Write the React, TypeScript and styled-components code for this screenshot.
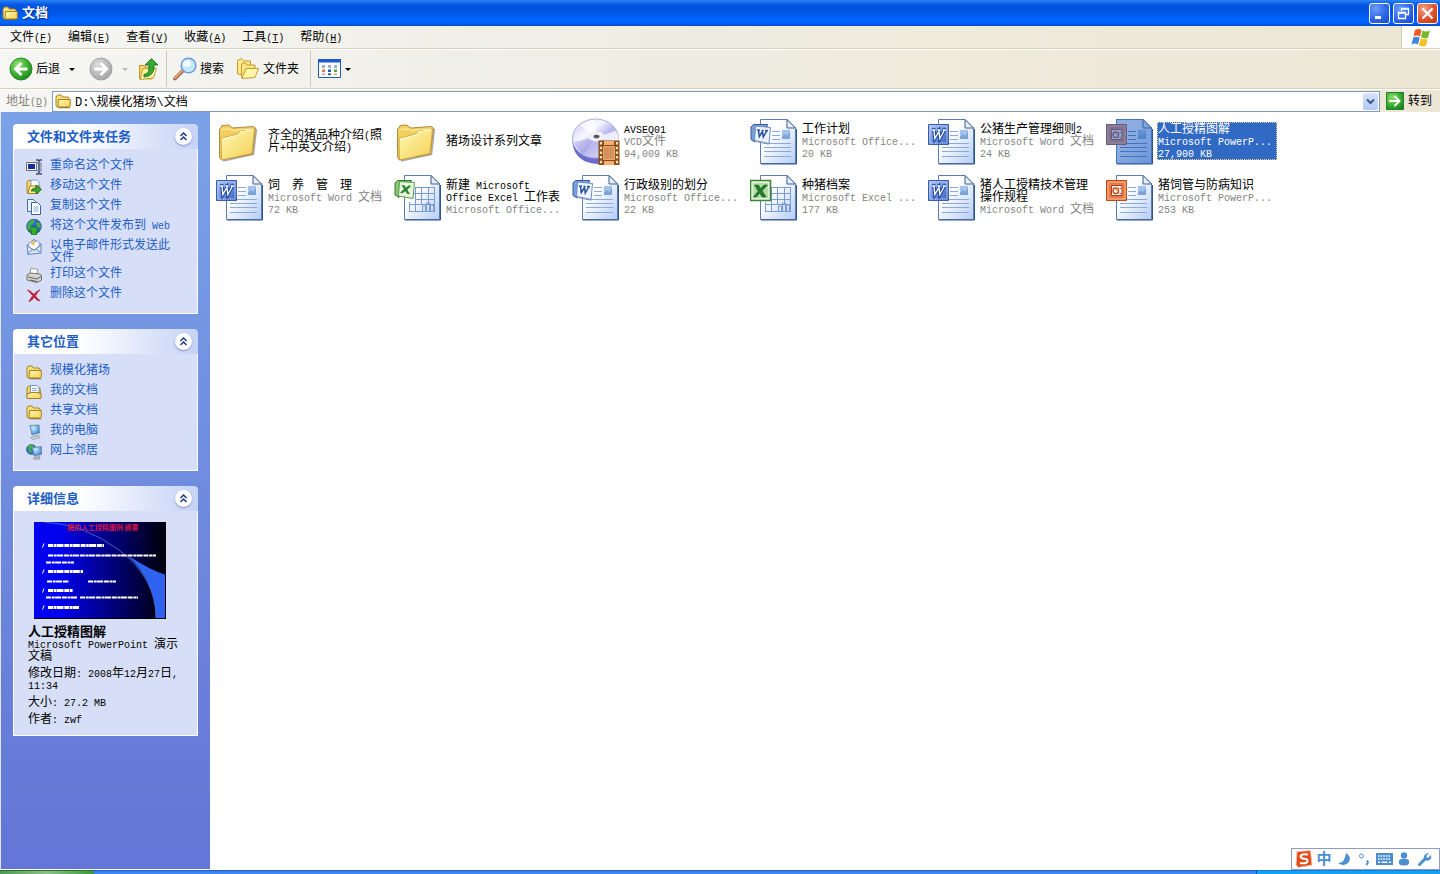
import React from "react";
import styled, { createGlobalStyle } from "styled-components";

const cjk = `"Liberation Sans", "Noto Sans CJK SC", sans-serif`;
const mono = `"Liberation Mono", "Noto Sans CJK SC", monospace`;

const GlobalStyle = createGlobalStyle`
  *, *::before, *::after { box-sizing: border-box; }
  body { margin: 0; background: #fff; font: 12px/12px ${cjk}; color: #000; }
  button, input { font: inherit; color: inherit; margin: 0; padding: 0; border: 0; background: none; }
  ul { list-style: none; margin: 0; padding: 0; }
  h1, h2, p { margin: 0; }
  svg { display: block; flex: none; }
`;

const Window = styled.div`
  min-height: 100vh;
  display: flex;
  flex-direction: column;
`;

const TitleBar = styled.header`
  height: 26px;
  flex: none;
  display: flex;
  align-items: center;
  gap: 3px;
  padding: 0 2px;
  background: linear-gradient(#2a86f8 0, #1a70f0 2px, #0456e2 5px, #0054e3 12px, #0062fb 18px, #0064ff 23px, #0048cc 26px);
`;

const WindowTitle = styled.h1`
  flex: 1;
  padding-left: 1px;
  font: bold 13px/18px ${cjk};
  color: #fff;
  text-shadow: 1px 1px 1px #0a2c80;
`;

const CaptionButton = styled.button<{ $danger?: boolean }>`
  width: 21px;
  height: 21px;
  display: grid;
  place-items: center;
  border: 1px solid #fff;
  border-radius: 3px;
  background: ${(p) =>
    p.$danger
      ? "radial-gradient(circle at 30% 25%, #f0a088, #e0512c 55%, #c03410)"
      : "radial-gradient(circle at 30% 25%, #6d9cf8, #2d66e8 55%, #1848c8)"};
`;

const Bar = styled.div`
  flex: none;
  display: flex;
  background: linear-gradient(90deg, #f6f6f4, #f0efe8 30%, #eeeadb 70%, #ece7d5);
`;

const MenuBar = styled(Bar).attrs({ as: "nav" })`
  height: 23px;
  border-bottom: 1px solid #d8d2bd;
  padding-left: 2px;
`;

const MenuButton = styled.button`
  padding: 0 8px;
  white-space: nowrap;
`;

const LogoCell = styled.div`
  width: 39px;
  margin-left: auto;
  display: grid;
  place-items: center;
  background: #fff;
  border-left: 1px solid #cfcab8;
`;

const ToolBar = styled(Bar)`
  height: 40px;
  align-items: center;
  border-top: 1px solid #fff;
  border-bottom: 1px solid #d8d2bd;
  padding-left: 9px;
`;

const ToolButton = styled.button<{ $width: number }>`
  width: ${(p) => p.$width}px;
  height: 32px;
  display: flex;
  align-items: center;
  gap: 3px;
  white-space: nowrap;
`;

const Caret = styled.span<{ $dim?: boolean; $near?: boolean }>`
  border: 3px solid transparent;
  border-top-color: ${(p) => (p.$dim ? "#bbb8ac" : "#000")};
  border-bottom: 0;
  margin-left: ${(p) => (p.$near ? 0 : 6)}px;
`;

const Divider = styled.span<{ $right: number }>`
  width: 1px;
  height: 36px;
  margin-right: ${(p) => p.$right}px;
  background: #cdc9b8;
`;

const AddressBar = styled(Bar)`
  height: 23px;
  align-items: center;
  border-top: 1px solid #fff;
  padding: 0 8px 0 6px;
`;

const AddressLabel = styled.label`
  width: 46px;
  color: #87857c;
`;

const AddressBox = styled.div`
  flex: 1;
  height: 21px;
  display: flex;
  align-items: center;
  padding: 0 1px 0 2px;
  background: #fff;
  border: 1px solid #7f9db9;
`;

const AddressInput = styled.input`
  flex: 1;
  height: 18px;
  padding-left: 4px;
  font-family: ${mono};
  outline: 0;
`;

const DropButton = styled.button`
  width: 15px;
  height: 17px;
  display: grid;
  place-items: center;
  border-radius: 2px;
  background: linear-gradient(#d6e2fd, #b4c8f6);
`;

const GoButton = styled.button`
  display: flex;
  align-items: center;
  gap: 4px;
  margin-left: 6px;
  white-space: nowrap;
`;

const Body = styled.div`
  flex: 1;
  display: flex;
  border-left: 1px solid #dfe6f8;
  border-bottom: 1px solid #fff;
`;

const Sidebar = styled.aside`
  width: 209px;
  flex: none;
  display: flex;
  flex-direction: column;
  gap: 15px;
  padding: 12px;
  background: linear-gradient(#7ba2e7, #6375d6);
`;

const Panel = styled.section`
  width: 185px;
`;

const PanelHead = styled.div`
  height: 25px;
  display: flex;
  align-items: center;
  justify-content: space-between;
  padding: 0 6px 0 14px;
  border-radius: 4px 4px 0 0;
  background: linear-gradient(90deg, #fff 35%, #c6d3f7);
`;

const PanelTitle = styled.h2`
  font: bold 13px/16px ${cjk};
  color: #215dc6;
`;

const FoldButton = styled.button`
  width: 17px;
  height: 17px;
  display: grid;
  place-items: center;
  border-radius: 50%;
  background: #fff;
  box-shadow: 0 1px 2px #8090c0;
`;

const PanelBody = styled.div`
  padding: 10px 12px;
  background: #d6dff7;
  border: 1px solid #fff;
  border-top: 0;
`;

const LinkList = styled.ul`
  display: flex;
  flex-direction: column;
  gap: 4px;
  padding-right: 8px;
`;

const TaskLink = styled.a`
  min-height: 16px;
  display: flex;
  gap: 8px;
  color: #215dc6;
  text-decoration: none;
`;

const Details = styled.div`
  display: flex;
  flex-direction: column;
  gap: 5px;
  padding-left: 2px;
`;

const Thumbnail = styled.div`
  padding: 1px 0 2px 6px;
`;

const DetailName = styled.strong`
  display: block;
  font: bold 13px/12px ${cjk};
`;

const Files = styled.main`
  flex: 1;
  display: grid;
  grid-template-columns: repeat(auto-fill, 178px);
  grid-auto-rows: 48px;
  row-gap: 8px;
  padding: 5px 0 0 6px;
  background: #fff;
`;

const FileTile = styled.button`
  display: flex;
  align-items: center;
  gap: 3px;
  text-align: left;
`;

const FileText = styled.span<{ $selected?: boolean }>`
  width: 120px;
  border: 1px ${(p) => (p.$selected ? "dotted #e8d090" : "solid transparent")};
  background: ${(p) => (p.$selected ? "#316ac5" : "transparent")};
  color: ${(p) => (p.$selected ? "#fff" : "#000")};
`;

const FileName = styled.span`
  display: block;
`;

const FileMeta = styled.span<{ $selected?: boolean }>`
  display: block;
  white-space: nowrap;
  color: ${(p) => (p.$selected ? "#fff" : "#848484")};
`;

const Latin = styled.span`
  font: 10px/0 ${mono};
`;

const Key = styled.u`
  text-underline-offset: 1px;
`;

const TaskBar = styled.footer`
  height: 4px;
  flex: none;
  display: flex;
  background: linear-gradient(#1f55c8, #3f8cf3 2px, #3a80ee);
`;

const StartEdge = styled.div`
  width: 94px;
  border-radius: 0 3px 0 0;
  background: linear-gradient(90deg, #4f9a4c, #8cc184 50%, #3c9838);
  border-top: 1px solid #2c7030;
`;

const TrayEdge = styled.div`
  width: 184px;
  margin-left: auto;
  background: #16a0f4;
  border-left: 1px solid #0b4fae;
  border-top: 1px solid #1080d8;
`;

const ImeBar = styled.div`
  position: fixed;
  right: 0;
  bottom: 4px;
  width: 149px;
  height: 22px;
  display: flex;
  align-items: center;
  padding-left: 2px;
  background: #fff;
  border: 1px solid #8d9cc4;
`;

const ImeButton = styled.button`
  width: 20px;
  height: 20px;
  display: grid;
  place-items: center;
  font: bold 15px/18px ${cjk};
  color: #4a8ed0;
`;

/* Half-width runs are set in a 6px-wide face beside the 12px Chinese glyphs. */
const T = ({ children }: { children: string }) => (
  <>
    {children.split(/([\x20-\x7e]+)/).map((run, i) => (i % 2 ? <Latin key={i}>{run}</Latin> : run))}
  </>
);

const Shortcut = ({ k }: { k: string }) => (
  <Latin>(<Key>{k}</Key>)</Latin>
);

const Defs = () => (
  <svg width="0" height="0" style={{ position: "absolute" }} aria-hidden="true">
    <defs>
      <linearGradient id="page" x1="0" y1="0" x2="1" y2="1">
        <stop offset=".35" stopColor="#fff" /><stop offset="1" stopColor="#b4ccf4" />
      </linearGradient>
      <linearGradient id="folder" x1="0" y1="0" x2="1" y2="1">
        <stop offset="0" stopColor="#fff9b8" /><stop offset="1" stopColor="#f4cf50" />
      </linearGradient>
      <radialGradient id="green" cx=".35" cy=".3" r=".8">
        <stop offset="0" stopColor="#8fe070" /><stop offset=".6" stopColor="#35ad2c" /><stop offset="1" stopColor="#1c8020" />
      </radialGradient>
      <radialGradient id="grey" cx=".35" cy=".3" r=".8">
        <stop offset="0" stopColor="#dcdcdc" /><stop offset="1" stopColor="#a0a0a0" />
      </radialGradient>
      <linearGradient id="word" x1="0" y1="0" x2="1" y2="1">
        <stop offset="0" stopColor="#a8c4f6" /><stop offset="1" stopColor="#3860c0" />
      </linearGradient>
      <linearGradient id="disc" x1="0" y1="0" x2="1" y2="1">
        <stop offset="0" stopColor="#c8c4f0" /><stop offset=".35" stopColor="#f8f8ff" />
        <stop offset=".55" stopColor="#b8b8ee" /><stop offset="1" stopColor="#e8ecff" />
      </linearGradient>
      <radialGradient id="screen" cx=".35" cy=".3" r=".8">
        <stop offset="0" stopColor="#c8f0ff" /><stop offset="1" stopColor="#2878d8" />
      </radialGradient>
      <linearGradient id="slide" x1="0" y1="0" x2="1" y2="0">
        <stop offset=".2" stopColor="#0202ee" /><stop offset=".95" stopColor="#000014" />
      </linearGradient>
    </defs>
  </svg>
);

const SmallFolder = ({ size = 16 }: { size?: number }) => (
  <svg width={size} height={size} viewBox="0 0 16 16">
    <path d="M1 12.500V4l1.500-2H6l1.500 2H13l1 1.500v7l-1 1.500H2z" fill="#f8e078" stroke="#a8801c" />
    <path d="M3 13l.5-6.500H15.300V12.500L14.500 14H3z" fill="url(#folder)" stroke="#a8801c" />
    <path d="M4 14.800h11.200" stroke="#7c6420" strokeWidth=".8" />
  </svg>
);

const BigFolder = () => (
  <svg width="48" height="48" viewBox="0 0 48 48">
    <path d="M7 44L37.500 37.500 40.500 12" fill="none" stroke="#666" strokeWidth="1.500" opacity=".55" />
    <path d="M3.500 40.500V12l1.500-1 1-2.500L13 8l2 2 2 1 20-1.500 2.500 1.500-3 26L5.500 43z" fill="#f3cf62" stroke="#b08a3c" />
    <path d="M5 21.500L22 17l2-3 14.500-2-2.500 24.500L5.500 43z" fill="url(#folder)" stroke="#c49a38" strokeWidth=".8" />
    <path d="M6 22.200l16.500-4.400 2-3L37.500 13" fill="none" stroke="#fffde0" />
    <path d="M5 12.500l9-.5 3 1.500 20-1.500" fill="none" stroke="#fff2a8" />
  </svg>
);

type Kind = "folder" | "disc" | "word" | "wordx" | "excel" | "excelx" | "ppt";

const Page = ({ grid, selected }: { grid?: boolean; selected?: boolean }) => (
  <g>
    <path d="M10.500 2.500H37l8.500 8.500v35.500h-35z" fill="url(#page)" stroke="#5c7cb4" />
    <path d="M11 47h35.500V12" fill="none" stroke="#34548c" />
    <path d="M37 2.500V11h8.500z" fill="#e4eefc" stroke="#42608e" />
    {grid ? (
      <path d="M22 14.500h19M20 20.500h21M22 26.500h19M15 31.500h26M15 38.500h11M15.500 29v10M21.500 14v24M27.500 14v18M34.500 14v18M40.500 14v24M28.500 38.500V33h3v5.500zM32.500 38.500V30h3v8.500zM36.500 38.500V32h3v6.500zM26 38.500h15" fill="none" stroke="#7b9cd0" />
    ) : (
      <>
        <path d="M22 14.500h8M22 18.500h8M22 22.500h8M14 26.500h27M14 30.500h27M14 34.500h27M14 39.500h27" stroke={selected ? "#547bc0" : "#8aa9dc"} />
        <path d="M32 13h8v9h-8z" fill="#a2c2ec" />
        <path d="M32 20l3-3 2 2 3-4v7h-8z" fill="#7da4da" />
      </>
    )}
  </g>
);

const FileIcon = ({ kind, selected }: { kind: Kind; selected?: boolean }) => {
  if (kind === "folder") return <BigFolder />;
  if (kind === "disc")
    return (
      <svg width="48" height="48" viewBox="0 0 48 48">
        <path d="M.5 20v6Q3 46 26 47q18-2 21-19z" fill="#6c6ccc" />
        <ellipse cx="23.500" cy="21.500" rx="23" ry="19.500" fill="url(#disc)" stroke="#aeb0dc" />
        <path d="M24 20L8 8Q15 3 23 3zM24 20l22 8q2-8-2-14z" fill="#fff" opacity=".7" />
        <path d="M24 20L2 25q3 8 10 12z" fill="#9c98e0" opacity=".5" />
        <ellipse cx="24.500" cy="19.500" rx="8" ry="5" fill="#f0f0fa" />
        <ellipse cx="24.500" cy="19.500" rx="3" ry="1.800" fill="#555" />
        <path d="M26.500 23.500h21V48h-21z" fill="#8a4a18" />
        <path d="M32 24h10v4H32zM32 44h10v4H32z" fill="#f4b070" />
        <path d="M31.500 29.500h11v13h-11z" fill="#d8905c" stroke="#f8c888" strokeWidth=".7" />
        <path d="M29 25v22M45 25v22" stroke="#ffe2a8" strokeWidth="2.200" strokeDasharray="2.500 2.200" />
      </svg>
    );
  return (
    <svg width="48" height="48" viewBox="0 0 48 48">
      <Page grid={kind === "excel" || kind === "excelx"} selected={selected} />
      {kind === "word" && (
        <g>
          <path d="M.5 7.500h20v20H.5z" fill="url(#word)" stroke="#3a5cab" />
          <path d="M2 9h17v17H2z" fill="none" stroke="#c8dafa" strokeWidth=".7" />
          <path d="M4 13h3.500M9.500 13h3M15 13h3M6 13l.8 8.500 4.200-7 .8 7L16.500 13" fill="none" stroke="#1d4298" strokeWidth="3.400" />
          <path d="M4 13h3.500M9.500 13h3M15 13h3M6 13l.8 8.500 4.200-7 .8 7L16.500 13" fill="none" stroke="#f4f8ff" strokeWidth="1.400" />
        </g>
      )}
      {kind === "wordx" && (
        <g>
          <path d="M3.500 7.500h14l-1 4H6L5 25 1 22.500V10z" fill="#7aa0dc" stroke="#36589c" />
          <path d="M5.500 9L20.500 10.500l-1.500 16L4.500 23.500z" fill="#edf3ff" stroke="#6c8cc4" />
          <path d="M7 13l3 .2M11.500 13.400h2M15 13.600l3 .2M8.500 13.500l.8 6 3.200-5 .8 5.500 3.400-6" fill="none" stroke="#284f9e" strokeWidth="1.500" />
          <path d="M6 24.500l13 2.700" stroke="#8898b0" />
        </g>
      )}
      {kind === "excel" && (
        <g>
          <path d="M.5 7.500h20v20H.5z" fill="#e4f4d8" stroke="#3f853c" strokeWidth="1.600" />
          <path d="M3 10h15v15H3z" fill="#b4dca4" />
          <path d="M4.500 12h4l2.200 3.500 3.300-3.500h3.500l-5.300 5.800 4 6.200h-4L9.700 20 6.500 24H3.500l4.700-5.800z" fill="#237830" stroke="#1c6428" strokeWidth=".6" />
        </g>
      )}
      {kind === "excelx" && (
        <g>
          <path d="M3.500 7.500h14l-1 3H6L5 24.500 1 22V10z" fill="#88c870" stroke="#338030" />
          <path d="M5.500 8.500L20.500 9.500l-1.500 16L4.500 23z" fill="#eaf6dc" stroke="#5a9a50" />
          <path d="M7.500 12l3 .3 1.500 2.500 2.500-2.300 2.800.2-4 4 2.700 4.600-3-.5-1.800-2.800-2.500 2.200-2.700-.5 4-3.700z" fill="#2d8038" />
        </g>
      )}
      {kind === "ppt" && (
        <g>
          <path d="M.5 7.500h20v20H.5z" fill="#ec7a48" stroke="#b84c20" />
          <path d="M2 9h17v17H2z" fill="none" stroke="#ffc8a0" strokeWidth=".8" />
          <path d="M5.500 12.500h10.500v10H5.500z" fill="#fff4ec" stroke="#a44020" />
          <circle cx="9.800" cy="17.800" r="2.800" fill="none" stroke="#b04420" strokeWidth="1.300" />
          <path d="M9.800 17.800v-3.300q3 0 3.200 3.300z" fill="#e87840" />
          <path d="M13.500 15.500H15M13.500 20.500H15" stroke="#a84020" />
        </g>
      )}
      {selected && (
        <g fill="#316ac5" opacity=".55">
          <path d="M10 2h27l9 9v36H10V28h11V7H10z" />
          <path d="M0 7h21v21H0z" />
        </g>
      )}
    </svg>
  );
};

const ArrowDisc = ({ fill, stroke, flip }: { fill: string; stroke: string; flip?: boolean }) => (
  <svg width="24" height="24" viewBox="0 0 24 24">
    <circle cx="12" cy="12" r="11" fill={`url(#${fill})`} stroke={stroke} />
    <path d={flip ? "M5.500 12h11M11.500 6l6 6-6 6" : "M18.500 12h-11M12.500 6l-6 6 6 6"} fill="none" stroke="#fff" strokeWidth="3" />
  </svg>
);

const UpFolder = () => (
  <svg width="24" height="24" viewBox="0 0 24 24">
    <path d="M2.500 21.500v-13h5l1 1.500h8.500v9l-2 3z" fill="#f4d468" stroke="#c09428" />
    <path d="M3 22.500l3-11h13.500l-3 9.500z" fill="#fff2a0" stroke="#c8a038" />
    <path d="M7 17.500q6-1 5-9.500H8l6.500-6.500L21 8h-4q1 11-10 12z" fill="#34a832" stroke="#1b6d1e" strokeWidth=".8" />
  </svg>
);

const Magnifier = () => (
  <svg width="25" height="24" viewBox="0 0 25 24">
    <path d="M3 21.500L10.500 14" stroke="#8a5a3c" strokeWidth="3.600" strokeLinecap="round" />
    <path d="M3 21L10 14" stroke="#e8a474" strokeWidth="2.200" strokeLinecap="round" />
    <circle cx="16.500" cy="8.500" r="7.300" fill="#c4e8fa" stroke="#6f9cd8" strokeWidth="1.500" />
    <ellipse cx="15" cy="6.500" rx="4" ry="3.200" fill="#fff" opacity=".8" />
  </svg>
);

const FolderStack = () => (
  <svg width="24" height="24" viewBox="0 0 24 24">
    <path d="M1.500 17V3.500l4-2L8 4h6.500v5L5 17.500z" fill="#f9e88c" stroke="#c69c30" />
    <path d="M5.500 20.500V7l3.500-1.500L11 8h8v4l-12 9.500z" fill="#f8e480" stroke="#c69c30" />
    <path d="M6 21.500l4-10h12.500l-3.500 9z" fill="#fff4a8" stroke="#c69c30" />
  </svg>
);

const ViewsIcon = () => (
  <svg width="24" height="20" viewBox="0 0 24 20">
    <path d="M.5.500h22v18H.5z" fill="#f8fbff" stroke="#1f57b8" />
    <path d="M0 0h23v3.500H0z" fill="#1c58cc" />
    <path d="M4 6h3v3H4zM10 6h3v3h-3zM16 6h3v3h-3z" fill="#a4b0c0" />
    <path d="M4 10.500h3v2.500H4z" fill="#e07848" /><path d="M10 10.500h3v2.500h-3z" fill="#2850c0" />
    <path d="M16 10.500h3v2.500h-3z" fill="#58a040" /><path d="M4 14.500h3V16H4z" fill="#e0a080" />
    <path d="M10 14.500h3V16h-3z" fill="#203880" /><path d="M16 14.500h3V16h-3z" fill="#c8b040" />
  </svg>
);

const WindowsFlag = () => (
  <svg width="20" height="19" viewBox="0 0 20 19">
    <path d="M4 2q3.500-2 6.500 0L9 8.500q-3.500-2-6.500 0z" fill="#ee5a24" />
    <path d="M11.500 2.500q3.500 2 7.500 0L17 9.500q-3.500 2-7-.5z" fill="#78b830" />
    <path d="M2.200 9.700q3-2 6.500 0L7 16.500q-3.500-2-6.500 0z" fill="#3c84dc" />
    <path d="M9.700 10.200q3.500 2 7 .5L15 17.500q-3.500 2-7-.5z" fill="#f8c020" />
  </svg>
);

const TaskIcon = ({ name }: { name: string }) => {
  const art: Record<string, React.ReactNode> = {
    rename: <><path d="M.5 3.500h10v8H.5z" fill="#fff" stroke="#667" /><path d="M2 5h7v5H2z" fill="#1030a0" /><path d="M10 1h2l1 1 1-1h2M10 15h2l1-1 1 1h2M13 2v12" fill="none" stroke="#444c6c" strokeWidth="1.500" /><path d="M10.500 4h4.500v8h-4.500z" fill="none" stroke="#6878a0" /></>,
    move: <><path d="M1 14V3l1-1.500h4L7.500 3H12v11z" fill="#f4d870" stroke="#a88028" /><path d="M5 1h6l2 2v7H5z" fill="#fff" stroke="#7c9cd0" /><path d="M2 14.500L4 7h10l-2 7.500z" fill="#fff0a0" stroke="#a88028" /><path d="M5 12q1-3 5-3V6l5.500 4.500L10 15v-3z" fill="#34a832" stroke="#156018" strokeWidth=".8" /></>,
    copy: <><path d="M1.500.500h6l2 2v10h-8z" fill="#e8f0ff" stroke="#4870b0" /><path d="M5.500 3.500h6l3 3v9h-9z" fill="#fff" stroke="#3f669c" /><path d="M7.500 8h5M7.500 10h5M7.500 12h5" stroke="#88a8d8" /></>,
    web: <><circle cx="8" cy="7.500" r="7.300" fill="#2c68c8" stroke="#1b4888" strokeWidth=".7" /><path d="M2 4q3-4 7-3L7 5 4 7 6 9l-2 4Q0 9 2 4zM10 3l4 1 1 5-4-1z" fill="#48b048" /><path d="M8 7l5.500 5H10.500v4h-5v-4H2.500z" fill="#34b030" stroke="#156818" strokeWidth=".8" /></>,
    mail: <><path d="M1 6l7-5.500L15 5v9L2 15.500z" fill="#dce8fa" stroke="#6486ba" /><path d="M3 3.500L13 2v6l-5 3-5-3z" fill="#fff" stroke="#9cb0cc" /><circle cx="7" cy="4" r="2" fill="#f0c060" /><path d="M1 6.500l7 5 7-6M1.500 15L7 10M15 14l-5-4" fill="none" stroke="#6486ba" /></>,
    print: <><path d="M5 1l7 1.500-1.500 6h-7z" fill="#fff" stroke="#999" /><path d="M1 8l3-2 10 1 1.500 2v4L11 15.500 1 13z" fill="#d4d4d0" stroke="#74746c" /><path d="M2 10l9 2 4-2.500M4 13l7 1.500" fill="none" stroke="#66665e" /></>,
    delete: <path d="M1.500 3q2 0 6.300 4.300Q11 4 14 2.700 11.500 5.500 9.300 8.800q2.200 2.800 4.900 5.200-2.700.3-6.100-3.700Q6 13.500 3 14.800 4 12 6.700 8.700 3.500 5 1.500 3z" fill="#cc2038" stroke="#a01028" strokeWidth=".6" />,
    docs: <><path d="M1 13V4l1.500-2H6l1 2h7l1 9z" fill="#f4d468" stroke="#a88028" /><path d="M4.500 1.500H11l2 2V10H4.500z" fill="#fff" stroke="#6c94c8" /><path d="M6 4.500h5M6 6.500h5" stroke="#80a8dc" /><path d="M1 9.500h3v-1h9v1h2v5H1z" fill="url(#folder)" stroke="#a88028" /></>,
    computer: <><path d="M4 1.500L13 1l.5 8L6 11z" fill="url(#screen)" stroke="#7890a8" /><path d="M8 11l4-1 .5 2.500-4 1z" fill="#c8ccd4" /><path d="M4.500 13.500l8.500-2 1 2L6.500 15.500z" fill="#d4d6dc" stroke="#808890" strokeWidth=".6" /></>,
    network: <><circle cx="5.500" cy="5.500" r="5" fill="#2c70c8" stroke="#204c80" strokeWidth=".6" /><path d="M2 2q4-3 6 0L5 5l1 4-3-1z" fill="#48b048" /><path d="M6.500 3.500L15.500 2.500v8L8 12z" fill="url(#screen)" stroke="#7890a8" /><path d="M9 12l4-1 .5 2-4 1zM7 14l7-1v2l-5 .8z" fill="#c8ccd4" stroke="#808890" strokeWidth=".6" /></>,
  };
  return name === "folder" ? <SmallFolder /> : <svg width="16" height="16" viewBox="0 0 16 16">{art[name]}</svg>;
};

const Fold = ({ label }: { label: string }) => (
  <FoldButton aria-label={label}>
    <svg width="9" height="9" viewBox="0 0 9 9">
      <path d="M1.500 4l3-3 3 3M1.500 8l3-3 3 3" fill="none" stroke="#1c3c88" strokeWidth="1.500" />
    </svg>
  </FoldButton>
);

const SlidePreview = () => (
  <svg width="132" height="97" viewBox="0 0 132 97" role="img" aria-label="人工授精图解">
    <path d="M0 0h132v97H0z" fill="url(#slide)" />
    <path d="M93 33Q116 48 132 53v43h-10Q122 60 93 33z" fill="#2e62f0" />
    <path d="M10 0Q50 2 85 28 122 56 122 96" fill="none" stroke="#4878d8" strokeWidth=".8" />
    <text x="33" y="8" fontSize="7" fontWeight="bold" fill="#d01848" fontFamily="Noto Sans CJK SC">猪的人工授精图例 摘要</text>
    <g stroke="#fff" fill="none">
      <path d="M10 21.500l-1.500 4M10 47.500L8.500 51.500M10 66.500L8.500 70.500M10 83.500L8.500 87.500" strokeWidth="1" />
      <path d="M14 23.500h56M14 49.500h35M14 68.500h25M14 85.500h31" strokeWidth="3" strokeDasharray="5 .6 2.500 .4 7 .8" />
      <path d="M14 33.500h108M12 40.500h28M13 59.500h22M54 59.500h28M12 75.500h31M46 75.500h58" strokeWidth="2" strokeDasharray="5 .7 3 .4 6 .8" />
    </g>
    <path d="M.5 96.500h131V0" fill="none" stroke="#000" />
  </svg>
);

const menus = [["文件", "F"], ["编辑", "E"], ["查看", "V"], ["收藏", "A"], ["工具", "T"], ["帮助", "H"]];

const tasks = [
  ["rename", "重命名这个文件"], ["move", "移动这个文件"], ["copy", "复制这个文件"], ["web", "将这个文件发布到 Web"],
  ["mail", "以电子邮件形式发送此文件"], ["print", "打印这个文件"], ["delete", "删除这个文件"],
];

const places = [
  ["folder", "规模化猪场"], ["docs", "我的文档"], ["folder", "共享文档"], ["computer", "我的电脑"], ["network", "网上邻居"],
];

interface FileEntry { kind: Kind; name: string; meta: string[]; selected?: boolean }

const files: FileEntry[] = [
  { kind: "folder", name: "齐全的猪品种介绍(照片+中英文介绍)", meta: [] },
  { kind: "folder", name: "猪场设计系列文章", meta: [] },
  { kind: "disc", name: "AVSEQ01", meta: ["VCD文件", "94,009 KB"] },
  { kind: "wordx", name: "工作计划", meta: ["Microsoft Office...", "20 KB"] },
  { kind: "word", name: "公猪生产管理细则2", meta: ["Microsoft Word 文档", "24 KB"] },
  { kind: "ppt", name: "人工授精图解", meta: ["Microsoft PowerP...", "27,900 KB"], selected: true },
  { kind: "word", name: "饲　养　管　理", meta: ["Microsoft Word 文档", "72 KB"] },
  { kind: "excelx", name: "新建 Microsoft Office Excel 工作表", meta: ["Microsoft Office..."] },
  { kind: "wordx", name: "行政级别的划分", meta: ["Microsoft Office...", "22 KB"] },
  { kind: "excel", name: "种猪档案", meta: ["Microsoft Excel ...", "177 KB"] },
  { kind: "word", name: "猪人工授精技术管理操作规程", meta: ["Microsoft Word 文档"] },
  { kind: "ppt", name: "猪饲管与防病知识", meta: ["Microsoft PowerP...", "253 KB"] },
];

const LinkPanel = ({ title, links }: { title: string; links: string[][] }) => (
  <Panel>
    <PanelHead><PanelTitle>{title}</PanelTitle><Fold label={title} /></PanelHead>
    <PanelBody>
      <LinkList>
        {links.map(([icon, text]) => (
          <li key={text}>
            <TaskLink href="#"><TaskIcon name={icon} /><span><T>{text}</T></span></TaskLink>
          </li>
        ))}
      </LinkList>
    </PanelBody>
  </Panel>
);

export default function App() {
  return (
    <Window>
      <GlobalStyle />
      <Defs />
      <TitleBar>
        <SmallFolder />
        <WindowTitle>文档</WindowTitle>
        <CaptionButton aria-label="最小化">
          <svg width="13" height="13"><path d="M2 9h6v3H2z" fill="#fff" /></svg>
        </CaptionButton>
        <CaptionButton aria-label="还原">
          <svg width="13" height="13"><path d="M4.500 4V1.500h7v6H9M4 2h8M1.500 5.500h7v6h-7zM1 6h8" fill="none" stroke="#fff" strokeWidth="1.300" /></svg>
        </CaptionButton>
        <CaptionButton aria-label="关闭" $danger>
          <svg width="13" height="13"><path d="M1.500 1.500l10 10M11.500 1.500l-10 10" stroke="#fff" strokeWidth="2.200" /></svg>
        </CaptionButton>
      </TitleBar>

      <MenuBar>
        {menus.map(([name, k]) => (
          <MenuButton key={k}>{name}<Shortcut k={k} /></MenuButton>
        ))}
        <LogoCell><WindowsFlag /></LogoCell>
      </MenuBar>

      <ToolBar>
        <ToolButton $width={80}><ArrowDisc fill="green" stroke="#2a8a28" />后退<Caret /></ToolButton>
        <ToolButton $width={48} aria-label="前进"><ArrowDisc fill="grey" stroke="#a4a4a4" flip /><Caret $dim /></ToolButton>
        <ToolButton $width={29} aria-label="向上"><UpFolder /></ToolButton>
        <Divider $right={5} />
        <ToolButton $width={64}><Magnifier />搜索</ToolButton>
        <ToolButton $width={74}><FolderStack />文件夹</ToolButton>
        <Divider $right={7} />
        <ToolButton $width={36} aria-label="查看"><ViewsIcon /><Caret $near /></ToolButton>
      </ToolBar>

      <AddressBar>
        <AddressLabel htmlFor="address">地址<Shortcut k="D" /></AddressLabel>
        <AddressBox>
          <SmallFolder />
          <AddressInput id="address" defaultValue="D:\规模化猪场\文档" />
          <DropButton aria-label="展开地址">
            <svg width="9" height="7"><path d="M1 1.500l3.500 3.500L8 1.500" fill="none" stroke="#3c5684" strokeWidth="2" /></svg>
          </DropButton>
        </AddressBox>
        <GoButton>
          <svg width="18" height="18" viewBox="0 0 18 18">
            <path d="M.5.500h17v17H.5z" fill="url(#green)" stroke="#24802a" />
            <path d="M3 9h10M8.500 4L13.500 9l-5 5" fill="none" stroke="#fff" strokeWidth="2" />
          </svg>
          转到
        </GoButton>
      </AddressBar>

      <Body>
        <Sidebar>
          <LinkPanel title="文件和文件夹任务" links={tasks} />
          <LinkPanel title="其它位置" links={places} />
          <Panel>
            <PanelHead><PanelTitle>详细信息</PanelTitle><Fold label="详细信息" /></PanelHead>
            <PanelBody>
              <Details>
                <Thumbnail><SlidePreview /></Thumbnail>
                <p><DetailName>人工授精图解</DetailName><T>Microsoft PowerPoint 演示文稿</T></p>
                <p><T>修改日期: 2008年12月27日, 11:34</T></p>
                <p><T>大小: 27.2 MB</T></p>
                <p><T>作者: zwf</T></p>
              </Details>
            </PanelBody>
          </Panel>
        </Sidebar>
        <Files>
          {files.map((f) => (
            <FileTile key={f.name}>
              <FileIcon kind={f.kind} selected={f.selected} />
              <FileText $selected={f.selected}>
                <FileName><T>{f.name}</T></FileName>
                {f.meta.map((m) => <FileMeta key={m} $selected={f.selected}><T>{m}</T></FileMeta>)}
              </FileText>
            </FileTile>
          ))}
        </Files>
      </Body>

      <TaskBar><StartEdge /><TrayEdge /></TaskBar>

      <ImeBar>
        <ImeButton aria-label="输入法">
          <svg width="18" height="18" viewBox="0 0 18 18">
            <path d="M2 1.500L15.500.500l1.500 14.500L3.500 17.500 1 15z" fill="#e04c1c" stroke="#f6c4a8" />
            <path d="M13 4.500Q6 3.500 5.500 6.500 6 8.500 9 8.700q4 .3 3.500 2.600-1 2.700-7.500 1.700" fill="none" stroke="#fff" strokeWidth="2" />
          </svg>
        </ImeButton>
        <ImeButton>中</ImeButton>
        <ImeButton aria-label="半角">
          <svg width="14" height="14" viewBox="0 0 14 14"><path d="M9 1q6 4 2.500 9.500Q7 15 1 11 8 11 9 1z" fill="#4a8ed0" /></svg>
        </ImeButton>
        <ImeButton aria-label="标点">
          <svg width="12" height="14" viewBox="0 0 12 14"><circle cx="3.500" cy="4" r="2" fill="none" stroke="#4a8ed0" /><path d="M9 8.500q2 2-.8 4.500" fill="none" stroke="#4a8ed0" strokeWidth="2" /></svg>
        </ImeButton>
        <ImeButton aria-label="软键盘">
          <svg width="17" height="12" viewBox="0 0 17 12"><path d="M0 0h17v12H0z" fill="#4a8ed0" /><path d="M2 3h13M2 6h13" stroke="#fff" strokeWidth="1.500" strokeDasharray="1.600 1" /><path d="M2 9.200h2M5.500 9.200h6M13 9.200h2" stroke="#fff" strokeWidth="1.400" /></svg>
        </ImeButton>
        <ImeButton aria-label="用户">
          <svg width="12" height="14" viewBox="0 0 12 14"><circle cx="6" cy="3.500" r="3.200" fill="#4a8ed0" /><path d="M1 9q0-2 3-2h4q3 0 3 2v2q0 2.500-5 2.500T1 11z" fill="#4a8ed0" /></svg>
        </ImeButton>
        <ImeButton aria-label="设置">
          <svg width="15" height="15" viewBox="0 0 15 15"><path d="M2.500 12.500L8 7" stroke="#4a8ed0" strokeWidth="3" strokeLinecap="round" /><path d="M12 1L9.500 3.500v2h2L14 3q1 3-1.500 5-2 1.200-4 .3Q6 6.500 7 4q1.500-3 5-3z" fill="#4a8ed0" /></svg>
        </ImeButton>
      </ImeBar>
    </Window>
  );
}
